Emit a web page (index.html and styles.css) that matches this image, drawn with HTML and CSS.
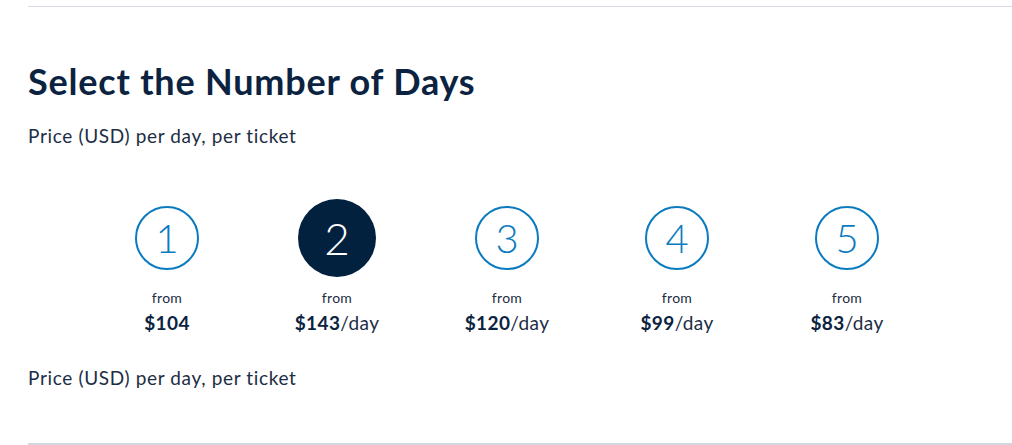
FILE: index.html
```html
<!DOCTYPE html>
<html lang="en">
<head>
<meta charset="utf-8">
<title>Select the Number of Days</title>
<link rel="stylesheet" href="styles.css">
</head>
<body>
<section class="days">
  <h2 class="days-title">Select the Number of Days</h2>
  <p class="days-note">Price (USD) per day, per ticket</p>
  <ul class="days-list">
    <li class="day">
      <span class="day-circle">1</span>
      <span class="day-from">from</span>
      <span class="day-price"><b>$104</b></span>
    </li>
    <li class="day day-selected">
      <span class="day-circle">2</span>
      <span class="day-from">from</span>
      <span class="day-price"><b>$143</b>/day</span>
    </li>
    <li class="day">
      <span class="day-circle">3</span>
      <span class="day-from">from</span>
      <span class="day-price"><b>$120</b>/day</span>
    </li>
    <li class="day">
      <span class="day-circle">4</span>
      <span class="day-from">from</span>
      <span class="day-price"><b>$99</b>/day</span>
    </li>
    <li class="day">
      <span class="day-circle">5</span>
      <span class="day-from">from</span>
      <span class="day-price"><b>$83</b>/day</span>
    </li>
  </ul>
  <p class="days-note days-note-bottom">Price (USD) per day, per ticket</p>
</section>
</body>
</html>
```

FILE: styles.css
```css
html, body {
  margin: 0;
  padding: 0;
  background: #ffffff;
}

body {
  font-family: Lato, "Noto Sans", sans-serif;
  color: #1c2d44;
}

.days {
  margin-top: 6px;
  margin-left: 28px;
  border-top: 1px solid #d6d9e3;
  border-bottom: 2px solid #d3d6de;
  height: 439px;
  box-sizing: border-box;
}

.days-title {
  margin: 52px 0 0;
  font-size: 36px;
  line-height: 44px;
  font-weight: 700;
  letter-spacing: 0.8px;
  color: #0b2340;
}

.days-note {
  margin: 21px 0 0;
  font-size: 19px;
  line-height: 24px;
  letter-spacing: 0.65px;
  color: #1c2d44;
}

.days-list {
  list-style: none;
  margin: 51px 0 0;
  padding: 0;
  width: 958px;
  display: flex;
  justify-content: center;
}

.day {
  width: 170px;
  display: flex;
  flex-direction: column;
  align-items: center;
}

.day-circle {
  width: 64px;
  height: 64px;
  margin: 7px 0;
  box-sizing: border-box;
  border: 2px solid #0b7bbf;
  border-radius: 50%;
  display: flex;
  align-items: center;
  justify-content: center;
  font-size: 40px;
  font-weight: 300;
  color: #0b7bbf;
}

.day-selected .day-circle {
  width: 78px;
  height: 78px;
  margin: 0;
  border: none;
  background: #02213e;
  color: #ffffff;
  font-size: 44px;
}

.day-from {
  margin-top: 12px;
  font-size: 14px;
  line-height: 18px;
  letter-spacing: 0.3px;
  color: #1c2d44;
}

.day-price {
  margin-top: 5px;
  font-size: 19px;
  line-height: 22px;
  letter-spacing: 0.4px;
  color: #1c2d44;
}

.day-price b {
  font-weight: 700;
  color: #0b2340;
}

.days-note-bottom {
  margin-top: 32px;
}
```
